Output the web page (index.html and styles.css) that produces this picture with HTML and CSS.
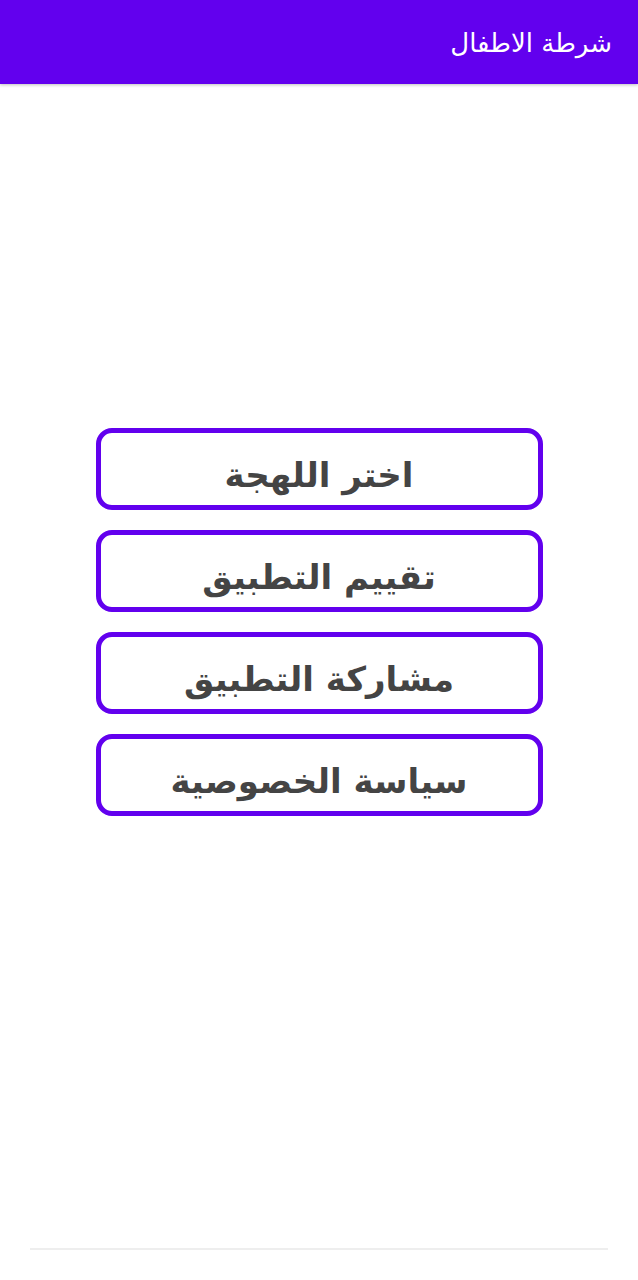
FILE: index.html
```html
<!DOCTYPE html>
<html lang="ar" dir="rtl">
<head>
<meta charset="utf-8">
<title>شرطة الاطفال</title>
<link rel="stylesheet" href="styles.css">
</head>
<body>
<div class="page">
  <header class="app-bar">
    <h1 class="app-title">شرطة الاطفال</h1>
  </header>
  <main class="menu">
    <button class="menu-btn" type="button"><span class="menu-label">اختر اللهجة</span></button>
    <button class="menu-btn" type="button"><span class="menu-label">تقييم التطبيق</span></button>
    <button class="menu-btn" type="button"><span class="menu-label">مشاركة التطبيق</span></button>
    <button class="menu-btn" type="button"><span class="menu-label">سياسة الخصوصية</span></button>
  </main>
  <footer class="bottom-strip"></footer>
</div>
</body>
</html>
```

FILE: styles.css
```css
html, body {
  margin: 0;
  padding: 0;
  background: #ffffff;
}

.page {
  display: flex;
  flex-direction: column;
  height: 100vh;
}

.app-bar {
  height: 84px;
  background: #6200ee;
  box-shadow: 0 1px 3px rgba(0, 0, 0, 0.25);
  display: flex;
  align-items: center;
  padding: 2px 26px 0;
  box-sizing: border-box;
  flex-shrink: 0;
}

.app-title {
  margin: 0;
  color: #ffffff;
  font-family: "DejaVu Sans", sans-serif;
  font-weight: normal;
  font-size: 26px;
  line-height: 1;
}

.menu {
  flex: 1;
  display: flex;
  flex-direction: column;
  align-items: center;
  gap: 20px;
  padding-top: 344px;
}

.menu-btn {
  width: 447px;
  height: 82px;
  box-sizing: border-box;
  border: 5px solid #6200ee;
  border-radius: 16px;
  background: #ffffff;
  padding: 19px 10px 0;
  display: flex;
  justify-content: center;
  align-items: flex-start;
  overflow: hidden;
}

.menu-label {
  display: block;
  height: 48px;
  overflow: hidden;
  color: #444444;
  font-family: "DejaVu Sans", sans-serif;
  font-weight: bold;
  font-size: 34px;
  line-height: 46px;
}

.bottom-strip {
  height: 32px;
  margin: 0 30px;
  border-top: 2px solid #eeeeee;
  box-sizing: border-box;
  flex-shrink: 0;
}
```
